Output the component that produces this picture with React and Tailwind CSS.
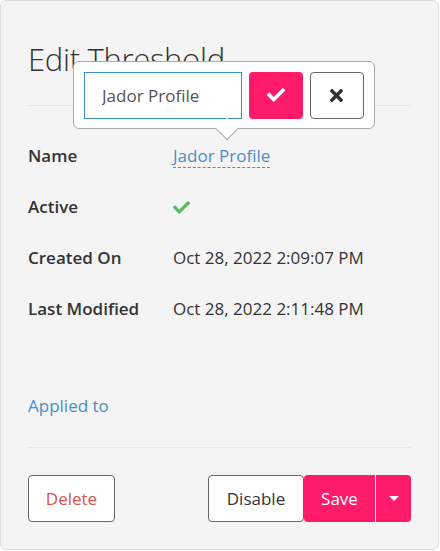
import React, { useState } from 'react';
import { FaCheck, FaTimes } from 'react-icons/fa';

const rows = [
    { label: 'Created On', value: 'Oct 28, 2022 2:09:07 PM' },
    { label: 'Last Modified', value: 'Oct 28, 2022 2:11:48 PM' },
];

const App = () => {
    const [name, setName] = useState('Jador Profile');

    return (
        <div className="w-[440px] h-[551px] bg-white font-['Open_Sans','Noto_Sans',sans-serif] text-[#333]">
            <div className="relative w-[439px] h-[550px] bg-[#f4f4f4] border border-[#dedede] rounded-md px-[27px] flex flex-col">
                <h1 className="mt-[38px] text-[31px] font-light leading-[40px] tracking-[-0.3px] text-[#333]">Edit Threshold</h1>
                <div className="mt-[26px] border-t border-[#e6e6e6]" />

                <div className="mt-[38px] flex flex-col gap-[27px] text-[17px] leading-[24px]">
                    <div className="flex items-center">
                        <div className="w-[145px] font-semibold">Name</div>
                        <span className="text-[#4a8ec9] border-b border-dashed border-[#4a8ec9] leading-[23px]">{name}</span>
                    </div>
                    <div className="flex items-center">
                        <div className="w-[145px] font-semibold">Active</div>
                        <FaCheck className="text-[#5cb85c] w-[17px] h-[17px]" />
                    </div>
                    {rows.map((r) => (
                        <div key={r.label} className="flex items-center">
                            <div className="w-[145px] font-semibold">{r.label}</div>
                            <div>{r.value}</div>
                        </div>
                    ))}
                </div>

                <div className="mt-[73px] text-[17px] leading-[24px] text-[#4a8ec9]">Applied to</div>
                <div className="mt-[29px] border-t border-[#e6e6e6]" />

                <div className="mt-[27px] flex items-center justify-between text-[17px]">
                    <button className="h-[47px] w-[87px] bg-white border border-[#666] rounded-[4px] text-[#d9534f]">Delete</button>
                    <div className="flex">
                        <button className="h-[47px] w-[96px] bg-white border border-[#666] rounded-[4px] text-[#333]">Disable</button>
                        <div className="flex h-[47px] bg-[#ff1a6a] rounded-[4px] text-white">
                            <button className="w-[72px] border-r border-white/90">Save</button>
                            <button className="w-[35px] flex items-center justify-center">
                                <span className="w-0 h-0 border-l-[5px] border-r-[5px] border-t-[5px] border-l-transparent border-r-transparent border-t-white" />
                            </button>
                        </div>
                    </div>
                </div>

                <div className="absolute left-[72px] top-[60px] w-[302px] h-[68px] bg-white border border-[#aaa] rounded-[6px] flex items-center px-[10px] gap-[7px]">
                    <input
                        value={name}
                        onChange={(e) => setName(e.target.value)}
                        className="w-[158px] h-[47px] border border-[#3a8fc4] px-[17px] text-[17px] text-[#555] outline-none"
                    />
                    <button className="w-[55px] h-[47px] bg-[#ff1a6a] rounded-[4px] flex items-center justify-center text-white">
                        <FaCheck className="w-[18px] h-[18px]" />
                    </button>
                    <button className="w-[55px] h-[47px] bg-white border border-[#666] rounded-[4px] flex items-center justify-center text-[#333]">
                        <FaTimes className="w-[19px] h-[19px]" />
                    </button>
                    <div className="absolute left-[145px] bottom-[-9px] w-[16px] h-[16px] bg-white border-r border-b border-[#aaa] rotate-45" />
                </div>
            </div>
        </div>
    );
};

export default App;
